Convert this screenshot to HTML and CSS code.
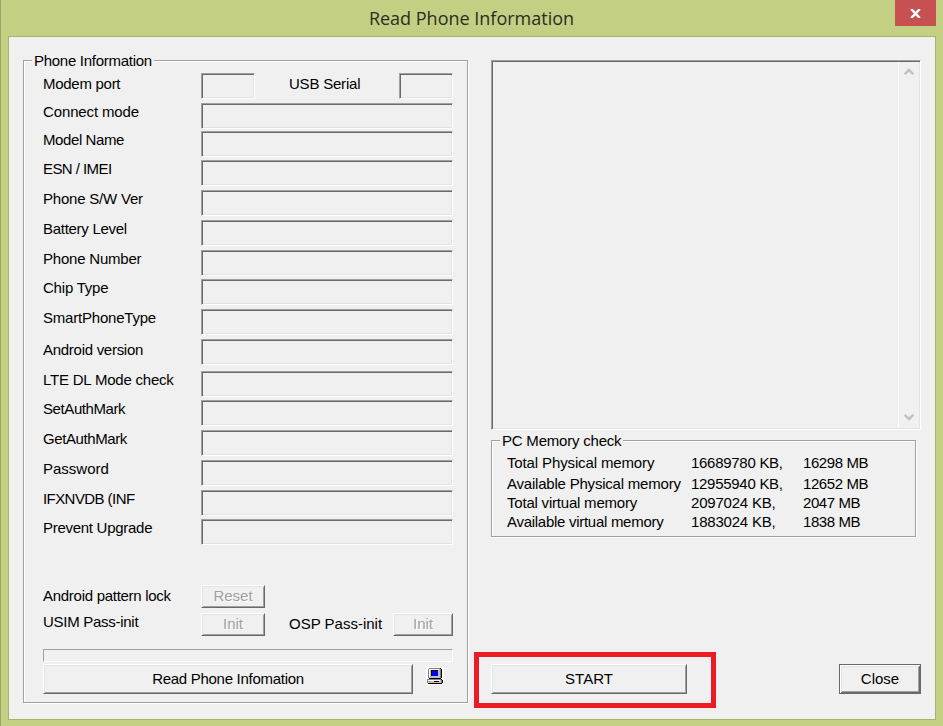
FILE: index.html
```html
<!DOCTYPE html>
<html lang="en">
<head>
<meta charset="utf-8">
<title>Read Phone Information</title>
<link rel="stylesheet" href="styles.css">
</head>
<body>
<div class="window">
  <header class="titlebar">
    <h1>Read Phone Information</h1>
    <button class="window-close" aria-label="Close window"><svg width="11" height="9" viewBox="0 0 11 9"><path d="M1.2 0 9.8 9M9.8 0 1.2 9" stroke="#fff" stroke-width="2.5"/></svg></button>
  </header>
  <main class="client">
    <section class="group phone">
      <h2 class="legend tight">Phone Information</h2>
      <div class="fields">
        <div class="row first"><label class="tight">Modem port</label><i class="sunken small"></i><label class="second">USB Serial</label><i class="sunken small"></i></div>
        <div class="row"><label class="loose">Connect mode</label><i class="sunken"></i></div>
        <div class="row"><label class="tighter">Model Name</label><i class="sunken"></i></div>
        <div class="row"><label class="tightest">ESN / IMEI</label><i class="sunken"></i></div>
        <div class="row"><label>Phone S/W Ver</label><i class="sunken"></i></div>
        <div class="row"><label class="tight">Battery Level</label><i class="sunken"></i></div>
        <div class="row"><label>Phone Number</label><i class="sunken"></i></div>
        <div class="row"><label>Chip Type</label><i class="sunken"></i></div>
        <div class="row"><label>SmartPhoneType</label><i class="sunken"></i></div>
        <div class="row low"><label class="tight">Android version</label><i class="sunken"></i></div>
        <div class="row"><label>LTE DL Mode check</label><i class="sunken"></i></div>
        <div class="row"><label class="tighter">SetAuthMark</label><i class="sunken"></i></div>
        <div class="row"><label class="tighter">GetAuthMark</label><i class="sunken"></i></div>
        <div class="row"><label class="natural">Password</label><i class="sunken"></i></div>
        <div class="row"><label class="tightest">IFXNVDB (INF</label><i class="sunken"></i></div>
        <div class="row"><label class="tight">Prevent Upgrade</label><i class="sunken"></i></div>
      </div>
      <div class="action pattern"><label class="tight">Android pattern lock</label><button class="btn" disabled>Reset</button></div>
      <div class="action usim"><label class="tight">USIM Pass-init</label><button class="btn" disabled>Init</button><label class="osp natural">OSP Pass-init</label><button class="btn narrow" disabled>Init</button></div>
      <div class="progress"></div>
      <div class="read">
        <button class="btn wide tight">Read Phone Infomation</button>
        <svg class="pc" width="18" height="18" viewBox="0 0 18 18" shape-rendering="crispEdges">
          <path fill="#fff" d="M0 0h18v18H0z"/>
          <path fill="#000" d="M3 1h12v1h1v9h-1v1H3zM2 12h14v1h1v3h-1v1H2v-1H1v-1h1z"/>
          <path fill="#808080" d="M3 1h11v1H3zM2 2h1v9H2zM1 12h14v1H1zM1 13h1v3H1z"/>
          <path fill="#c0c0c0" d="M3 2h11v9H3zM2 13h13v3H2z"/>
          <path fill="#fff" d="M3 2h10v1H3zM3 3h1v7H3zM2 13h12v1H2z"/>
          <path fill="#808080" d="M14 2h1v9h-1zM15 13h1v3h-1z"/>
          <path fill="#000" d="M5 3h7v6H5zM8 14h5v1H8z"/>
          <path fill="#00f" d="M6 4h6v5H6z"/>
          <path fill="#0c0" d="M3 14h1v1H3z"/>
        </svg>
      </div>
    </section>
    <section class="side">
      <div class="log sunken"><div class="scroll">
        <svg width="10" height="8" viewBox="0 0 10 8"><path d="M.7 6.2 5 2l4.3 4.2" fill="none" stroke="#bfbfbf" stroke-width="2.4"/></svg>
        <svg width="10" height="8" viewBox="0 0 10 8"><path d="M.7 1.8 5 6l4.3-4.2" fill="none" stroke="#bfbfbf" stroke-width="2.4"/></svg>
      </div></div>
      <section class="group memory">
        <h2 class="legend">PC Memory check</h2>
        <div class="mem"><span class="loose">Total Physical memory</span><span class="tight">16689780 KB,</span><span class="tighter">16298 MB</span></div>
        <div class="mem"><span>Available Physical memory</span><span class="tight">12955940 KB,</span><span class="tighter">12652 MB</span></div>
        <div class="mem"><span>Total virtual memory</span><span>2097024 KB,</span><span class="tighter">2047 MB</span></div>
        <div class="mem"><span class="tight">Available virtual memory</span><span>1883024 KB,</span><span class="tighter">1838 MB</span></div>
      </section>
      <div class="bottom">
        <div class="highlight"><button class="btn start">START</button></div>
        <button class="btn default">Close</button>
      </div>
    </section>
  </main>
</div>
</body>
</html>
```

FILE: styles.css
```css
* { box-sizing: border-box; }
body { margin: 0; font: 15px/18px "Liberation Sans", Arial, sans-serif; color: #000; }
button { font: inherit; color: inherit; padding: 0; border: 0; display: block; }

.window { width: 943px; height: 726px; background: #c3d083; border-left: 1px solid #9ca669; padding: 0 7px 6px; display: flex; flex-direction: column; }
.titlebar { height: 36px; flex: none; display: grid; grid-template-columns: 1fr 41px; align-items: start; }
.titlebar h1 { margin: 6px 0 0; padding-left: 40px; text-align: center; font: 400 18px/25px "Open Sans", "Noto Sans", sans-serif; color: #2b2d25; }
.window-close { width: 41px; height: 26px; background: #c75050; display: flex; align-items: center; justify-content: center; }
.client { height: 684px; width: 928px; background: #f0f0f0; border: 1px solid #a7b36c; padding: 23px 14px 0; display: flex; gap: 23px; }

.group { border: 1px solid #a0a0a0; box-shadow: 1px 1px 0 #fff, inset 1px 1px 0 #fff; }
.legend { font: inherit; margin: -9px 0 0 8px; width: max-content; background: #f0f0f0; padding: 0 2px; height: 18px; }
.phone { width: 445px; height: 643px; }
.fields { display: grid; grid-template-rows: 30px 28px 29px 30px 30px 30px 29px 30px 30px 32px 29px 30px 30px 30px 29px 26px; margin: 3px 0 0 19px; width: 410px; }
.row { display: flex; align-items: flex-start; }
.row label { width: 158px; white-space: nowrap; }
.row .sunken { height: 26px; flex: 1; }
.row .small { flex: none; width: 54px; }
.row.first label, .row.low label { padding-top: 2px; }
.row .second { width: 144px; padding-left: 34px; }

/* Tracking steps for the dialog font */
label, .legend, .mem span { letter-spacing: -0.21px; }
label.natural { letter-spacing: 0; }
label.loose, .mem .loose { letter-spacing: -0.13px; }
.legend.tight, label.tight, .mem .tight, .btn.tight { letter-spacing: -0.28px; }
label.tighter, .mem .tighter { letter-spacing: -0.41px; }
label.tightest { letter-spacing: -0.57px; }

.sunken { border: 1px solid; border-color: #a0a0a0 #fff #fff #a0a0a0; box-shadow: inset 1px 1px 0 #696969, inset -1px -1px 0 #e3e3e3; display: block; }

.btn { background: #f0f0f0; width: 64px; height: 23px; border: 1px solid; border-color: #fff #696969 #696969 #fff; box-shadow: inset 1px 1px 0 #e3e3e3, inset -1px -1px 0 #a0a0a0; text-align: center; }
.btn:disabled { color: #a0a0a0; text-shadow: 1px 1px 0 #fff; padding-bottom: 2px; }
.narrow { width: 60px; }
.action { display: flex; margin-left: 19px; width: 410px; }
.action label { width: 158px; }
.pattern { margin-top: 40px; height: 28px; }
.pattern label { padding-top: 2px; }
.usim { height: 36px; }
.usim .osp { width: 128px; padding: 2px 0 0 24px; }
.progress { margin-left: 19px; width: 410px; height: 13px; border: 1px solid; border-color: #a0a0a0 #fff #fff #a0a0a0; }
.read { margin: 2px 0 0 19px; display: flex; gap: 13px; }
.wide { width: 370px; height: 30px; }
.pc { margin-top: 3px; }

.side { width: 430px; }
.log { height: 370px; padding: 1px; display: flex; justify-content: flex-end; }
.scroll { width: 21px; border-left: 1px solid #fff; display: flex; flex-direction: column; align-items: center; justify-content: space-between; padding: 6px 0 7px; }
.memory { width: 425px; height: 97px; margin-top: 10px; }
.mem { margin-left: 15px; display: grid; grid-template-columns: 184px 112px auto; height: 19px; white-space: nowrap; }
.mem:nth-of-type(1) { margin-top: 4px; height: 21px; }
.bottom { display: flex; justify-content: space-between; margin: 115px 0 0 -17px; }
.highlight { width: 242px; height: 56px; border: 5px solid #ed1c24; padding: 7px 12px; }
.start { width: 196px; height: 30px; }
.default { width: 82px; height: 30px; margin-top: 12px; border-color: #696969; box-shadow: inset 1px 1px 0 #fff, inset -1px -1px 0 #696969, inset 2px 2px 0 #e3e3e3, inset -2px -2px 0 #a0a0a0; }
```
